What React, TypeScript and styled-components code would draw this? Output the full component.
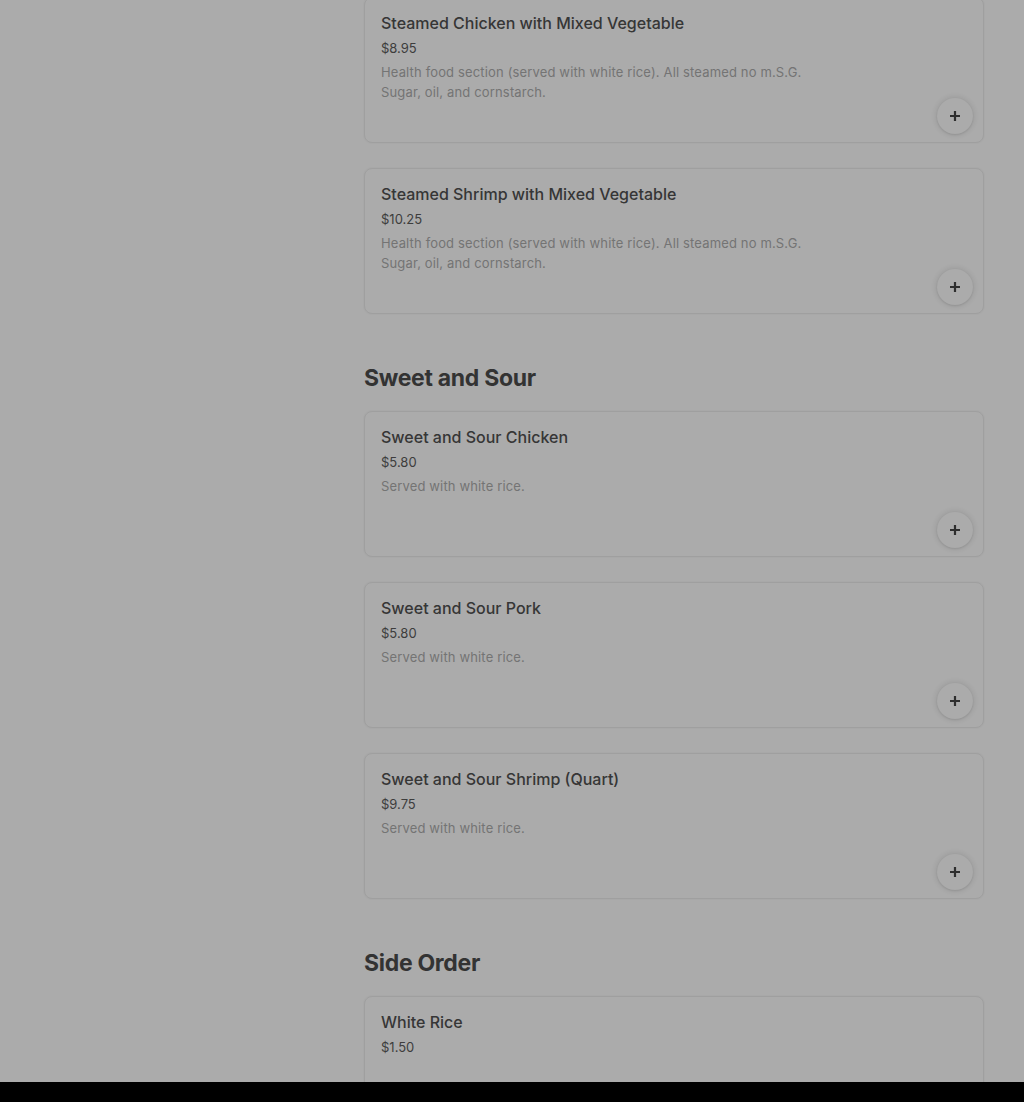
import React from "react";
import styled, { createGlobalStyle } from "styled-components";

const Global = createGlobalStyle`
  html, body { margin: 0; padding: 0; background: #000; }
  body { font-family: Inter, "Noto Sans", Arial, sans-serif; -webkit-font-smoothing: antialiased; }
`;

const Viewport = styled.div`
  height: 1082px;
  overflow: hidden;
  background: #ababab;
  display: grid;
  grid-template-columns: 364px 620px 1fr;
`;

const Sidebar = styled.div``;

const Main = styled.main`
  margin-top: -3px;
  display: flex;
  flex-direction: column;
`;

const Section = styled.section`
  display: flex;
  flex-direction: column;
  gap: 25px;
  margin-bottom: 48px;
`;

const SectionTitle = styled.h2`
  margin: 0 0 -8px;
  font-size: 23px;
  line-height: 32px;
  font-weight: 700;
  letter-spacing: -0.3px;
  color: #333;
`;

const Card = styled.div`
  position: relative;
  box-sizing: border-box;
  height: 146px;
  border: 1px solid #9f9f9f;
  border-radius: 8px;
  box-shadow: 0 0 2px rgba(0, 0, 0, 0.06);
  padding: 15px 16px 8px 16px;
  display: flex;
  flex-direction: column;
`;

const ItemName = styled.div`
  font-size: 16px;
  line-height: 20px;
  font-weight: 500;
  color: #363636;
`;

const Price = styled.div`
  margin-top: 6px;
  font-size: 13px;
  line-height: 18px;
  color: #3d3d3d;
`;

const Desc = styled.div`
  margin-top: 5px;
  max-width: 440px;
  font-size: 13px;
  line-height: 20px;
  letter-spacing: 0.15px;
  color: #747474;
`;

const AddButton = styled.button`
  position: absolute;
  right: 10px;
  bottom: 8px;
  width: 36px;
  height: 36px;
  border-radius: 50%;
  border: none;
  background: #ababab;
  box-shadow: 0 0 6px rgba(0, 0, 0, 0.14), 0 1px 2px rgba(0, 0, 0, 0.08);
  display: flex;
  align-items: center;
  justify-content: center;
  padding: 0;
  color: #2e2e2e;
`;

const Plus = () => (
  <svg width="12" height="12" viewBox="0 0 12 12">
    <path d="M6 1v10M1 6h10" stroke="currentColor" strokeWidth="2.2" />
  </svg>
);

type ItemProps = { name: string; price: string; desc?: string };

const Item = ({ name, price, desc }: ItemProps) => (
  <Card>
    <ItemName>{name}</ItemName>
    <Price>{price}</Price>
    {desc && <Desc>{desc}</Desc>}
    <AddButton aria-label="Add">
      <Plus />
    </AddButton>
  </Card>
);

const health =
  "Health food section (served with white rice). All steamed no m.S.G. Sugar, oil, and cornstarch.";

export default function App() {
  return (
    <>
      <Global />
      <Viewport>
        <Sidebar />
        <Main>
          <Section>
            <Item name="Steamed Chicken with Mixed Vegetable" price="$8.95" desc={health} />
            <Item name="Steamed Shrimp with Mixed Vegetable" price="$10.25" desc={health} />
          </Section>
          <Section>
            <SectionTitle>Sweet and Sour</SectionTitle>
            <Item name="Sweet and Sour Chicken" price="$5.80" desc="Served with white rice." />
            <Item name="Sweet and Sour Pork" price="$5.80" desc="Served with white rice." />
            <Item name="Sweet and Sour Shrimp (Quart)" price="$9.75" desc="Served with white rice." />
          </Section>
          <Section>
            <SectionTitle>Side Order</SectionTitle>
            <Item name="White Rice" price="$1.50" />
          </Section>
        </Main>
        <div />
      </Viewport>
    </>
  );
}
